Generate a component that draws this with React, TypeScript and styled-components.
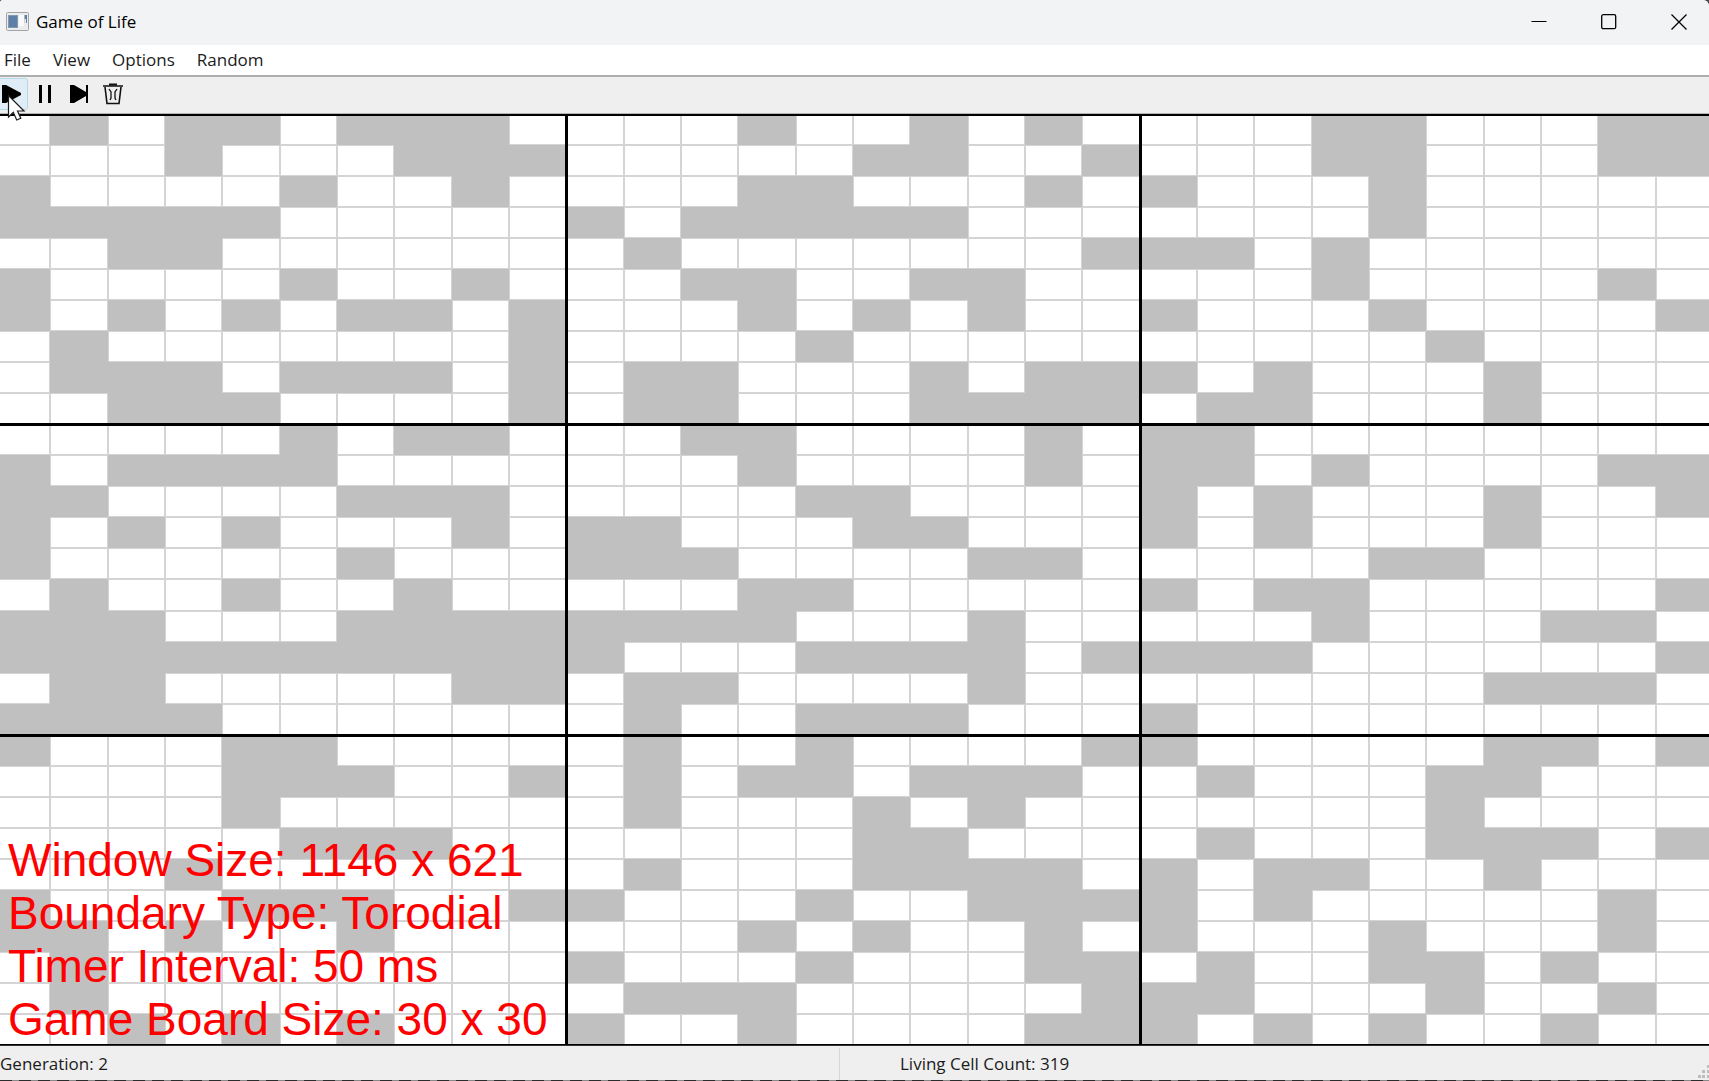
import React from "react";
import styled, { createGlobalStyle } from "styled-components";

const GlobalStyle = createGlobalStyle`
  *, *::before, *::after { box-sizing: border-box; }
  body { margin: 0; background: #4a4a4a; }
`;

const UI_FONT = `"Open Sans", "Noto Sans", sans-serif`;
const ALIVE = "#c0c0c0";
const LINE = "#d4d4d4";

const Window = styled.div`
  display: flex;
  flex-direction: column;
  min-height: 100vh;
  overflow: hidden;
  border-radius: 3px 6px 0 0;
  background: #efefef;
  color: #1b1b1b;
  font-family: ${UI_FONT};
`;

const TitleBar = styled.header`
  display: flex;
  align-items: center;
  height: 45px;
  padding: 0 0 2px 6px;
  background: #f2f3f4;
`;

const Title = styled.h1`
  flex: 1;
  margin: 0 0 0 7px;
  font-size: 17px;
  line-height: 24px;
  font-weight: 400;
  color: #000;
`;

const WindowControls = styled.div`
  display: flex;
  align-self: stretch;
  margin-right: -5px;
`;

const ControlButton = styled.button`
  display: flex;
  align-items: center;
  justify-content: center;
  width: 70px;
  padding: 0;
  border: 0;
  background: transparent;
`;

const MenuBar = styled.nav`
  display: flex;
  height: 32px;
  align-items: center;
  gap: 22px;
  padding: 0 4px;
  background: #fff;
  border-bottom: 2px solid #adadad;
`;

const MenuButton = styled.button`
  padding: 0;
  border: 0;
  background: transparent;
  color: #1b1b1b;
  font-family: inherit;
  font-size: 17px;
  line-height: 24px;
`;

const ToolBar = styled.div`
  position: relative;
  display: flex;
  height: 37px;
  padding: 1px 0 3px;
  margin-left: -6px;
  border-bottom: 1px solid #b4b4b4;
`;

const ToolButton = styled.button<{ $hot?: boolean }>`
  display: flex;
  align-items: center;
  justify-content: center;
  width: 34px;
  padding: 0;
  border: 1px solid ${(p) => (p.$hot ? "#b4d9e8" : "transparent")};
  border-radius: 3px;
  background: ${(p) => (p.$hot ? "#e1edf6" : "transparent")};
`;

const Pointer = styled.svg`
  position: absolute;
  z-index: 2;
  left: 13px;
  top: 17px;
  pointer-events: none;
`;

const Board = styled.main`
  position: relative;
  display: flex;
  flex: 1;
  overflow: hidden;
`;

const Blocks = styled.div`
  display: grid;
  flex: 1;
  grid-template-columns: repeat(3, 1fr);
  grid-template-rows: repeat(3, 1fr);
  margin: 0 -4px 0 -7px;
`;

const Block = styled.div`
  position: relative;
  display: grid;
  grid-template-columns: repeat(10, 1fr);
  grid-template-rows: repeat(10, 1fr);

  &::after {
    content: "";
    position: absolute;
    inset: 0;
    border: solid #000;
    border-width: 2px 1px 1px 2px;
  }
`;

const Cell = styled.div<{ $alive: boolean }>`
  border: 1px solid ${(p) => (p.$alive ? ALIVE : LINE)};
  background: ${(p) => (p.$alive ? ALIVE : "#fff")};
`;

const Hud = styled.div`
  position: absolute;
  left: 8px;
  bottom: -1px;
  color: #f00;
  font-family: "Liberation Sans", Arial, sans-serif;
  font-size: 46px;
  line-height: 53px;
  white-space: nowrap;
`;

const StatusBar = styled.footer`
  position: relative;
  display: grid;
  grid-template-columns: 839fr 870fr;
  height: 36px;
  padding: 2px 0 1px;
  border-top: 1px solid #333;
  background: repeating-linear-gradient(90deg, #2c2c2c 0 12px, #8a8a8a 12px 19px) bottom / 100% 1px no-repeat #efefef;
`;

const StatusPane = styled.div<{ $second?: boolean }>`
  padding-left: ${(p) => (p.$second ? "60px" : "0")};
  border-left: ${(p) => (p.$second ? "1px solid #d7d7d7" : "0")};
  font-size: 17px;
  line-height: 32px;
  white-space: nowrap;
`;

const Grip = styled.svg`
  position: absolute;
  right: 0;
  bottom: 2px;
`;

const GENERATION: string[][] = [
  [
    ".#.##.###.", "...#...###", "#....#..#.", "#####.....", "..##......",
    "#....#..#.", "#.#.#.##.#", ".#.......#", ".###.###.#", "..###....#",
  ],
  [
    "...#..#.#.", ".....##..#", "...##...#.", "#.#####...", ".#.......#",
    "..##..##..", "...#.#.#..", "....#.....", ".##...#.##", ".##...####",
  ],
  [
    "...##...##", "...##...##", "#...#.....", "....#.....", "##.#......",
    "...#....#.", "#...#....#", ".....#....", "#.#...#...", ".##...#...",
  ],
  [
    ".....#.##.", "#.####....", "##....###.", "#.#.#...#.", "#.....#...",
    ".#..#..#..", "###...####", "##########", ".##.....##", "####......",
  ],
  [
    "..##....#.", "...#....#.", "....##....", "##...##...", "###....##.",
    "...##.....", "####...#..", "#...####.#", ".##....#..", ".#..###...",
  ],
  [
    "##........", "##.#....##", "#.#...#..#", "#.#...#...", "....##....",
    "#.##.....#", "...#...##.", "###......#", "......###.", "#.........",
  ],
  [
    "#...##....", "....###..#", "....#.....", ".....###..", "...#......",
    "#...###..#", "##.#..#...", ".#........", ".#........", "..#.#.#...",
  ],
  [
    ".#..#....#", ".#.##.###.", ".#...#.#..", ".....##...", ".#...####.",
    "#...#..###", "...#.#..#.", "#...#...##", ".###.....#", "#..#....##",
  ],
  [
    "#.....##.#", ".#...##...", ".....#....", ".#...###.#", "#.##..#...",
    "#.#.....#.", "#...#...#.", ".#..##.#..", "##...#..#.", "#.#.#..#..",
  ],
];

const HUD_LINES = [
  "Window Size: 1146 x 621",
  "Boundary Type: Torodial",
  "Timer Interval: 50 ms",
  "Game Board Size: 30 x 30",
];

const AppIcon = () => (
  <svg width="23" height="19" viewBox="0 0 23 19" aria-hidden="true">
    <rect x="0.5" y="0.5" width="22" height="18" rx="1" fill="#ececec" stroke="#a3a3a3" />
    <rect x="2.5" y="3.5" width="9" height="12" fill="#5d7fa8" stroke="#8299b3" />
    <rect x="13" y="3" width="5" height="11" fill="#fafafa" />
    <rect x="18.5" y="3" width="2.5" height="8" fill="#5d7fa8" />
    <rect x="18.5" y="7" width="1.5" height="4" fill="#e8e8e8" />
  </svg>
);

const PlayIcon = () => (
  <svg width="20" height="20" viewBox="0 0 20 20" aria-hidden="true">
    <path d="M1 1H5L20 9V11L5 19H1Z" fill="#000" />
  </svg>
);

const PauseIcon = () => (
  <svg width="20" height="20" viewBox="0 0 20 20" aria-hidden="true">
    <path d="M4 1H7V19H4ZM13 1H16V19H13Z" fill="#000" />
  </svg>
);

const NextIcon = () => (
  <svg width="20" height="20" viewBox="0 0 20 20" aria-hidden="true">
    <path d="M1 1H5L17 8V1H19V19H17V12L5 19H1Z" fill="#000" />
  </svg>
);

const TrashIcon = () => (
  <svg width="22" height="22" viewBox="0 0 22 22" fill="none" stroke="#111" aria-hidden="true">
    <path d="M1 3H21" strokeWidth="1.6" />
    <path d="M7 1.5H15" strokeWidth="2" />
    <path d="M3 4L5 20.5H17L19 4" strokeWidth="1.6" />
    <path d="M7 6L9 9V15L8 17M15 6L13 9V15L14 17" strokeWidth="1.3" />
  </svg>
);

export default function App() {
  return (
    <>
      <GlobalStyle />
      <Window>
        <TitleBar>
          <AppIcon />
          <Title>Game of Life</Title>
          <WindowControls>
            <ControlButton aria-label="Minimize">
              <svg width="16" height="16" viewBox="0 0 16 16" stroke="#000" fill="none">
                <path d="M0.5 7.5H15.5" />
              </svg>
            </ControlButton>
            <ControlButton aria-label="Maximize">
              <svg width="16" height="16" viewBox="0 0 16 16" stroke="#000" fill="none">
                <rect x="0.7" y="0.7" width="14" height="14" rx="1.5" strokeWidth="1.3" />
              </svg>
            </ControlButton>
            <ControlButton aria-label="Close">
              <svg width="16" height="16" viewBox="0 0 16 16" stroke="#000" fill="none">
                <path d="M0.5 0.5L15.5 15.5M15.5 0.5L0.5 15.5" strokeWidth="1.3" />
              </svg>
            </ControlButton>
          </WindowControls>
        </TitleBar>

        <MenuBar>
          {["File", "View", "Options", "Random"].map((name) => (
            <MenuButton key={name}>{name}</MenuButton>
          ))}
        </MenuBar>

        <ToolBar role="toolbar" aria-label="Simulation">
          <ToolButton $hot aria-label="Run"><PlayIcon /></ToolButton>
          <ToolButton aria-label="Pause"><PauseIcon /></ToolButton>
          <ToolButton aria-label="Next generation"><NextIcon /></ToolButton>
          <ToolButton aria-label="Clear"><TrashIcon /></ToolButton>
          <Pointer width="20" height="28" viewBox="0 0 20 28" aria-hidden="true">
            <path
              d="M1.5 1.5V23L6.3 18.3L9.7 26L13.8 24.2L10.5 17H17Z"
              fill="#fff"
              stroke="#1c1c1c"
              strokeWidth="1.2"
            />
          </Pointer>
        </ToolBar>

        <Board>
          <Blocks>
            {GENERATION.map((rows, block) => (
              <Block key={block}>
                {rows.join("").split("").map((state, i) => (
                  <Cell key={i} $alive={state === "#"} />
                ))}
              </Block>
            ))}
          </Blocks>
          <Hud>
            {HUD_LINES.map((line) => (
              <div key={line}>{line}</div>
            ))}
          </Hud>
        </Board>

        <StatusBar>
          <StatusPane>Generation: 2</StatusPane>
          <StatusPane $second>Living Cell Count: 319</StatusPane>
          <Grip width="12" height="14" viewBox="0 0 12 14" fill="#bdbdbd" aria-hidden="true">
            <path d="M10 0H12V3H10ZM5 5H8V8H5ZM10 5H12V8H10ZM1 10H4V13H1ZM5 10H8V13H5ZM10 10H12V13H10Z" />
          </Grip>
        </StatusBar>
      </Window>
    </>
  );
}
